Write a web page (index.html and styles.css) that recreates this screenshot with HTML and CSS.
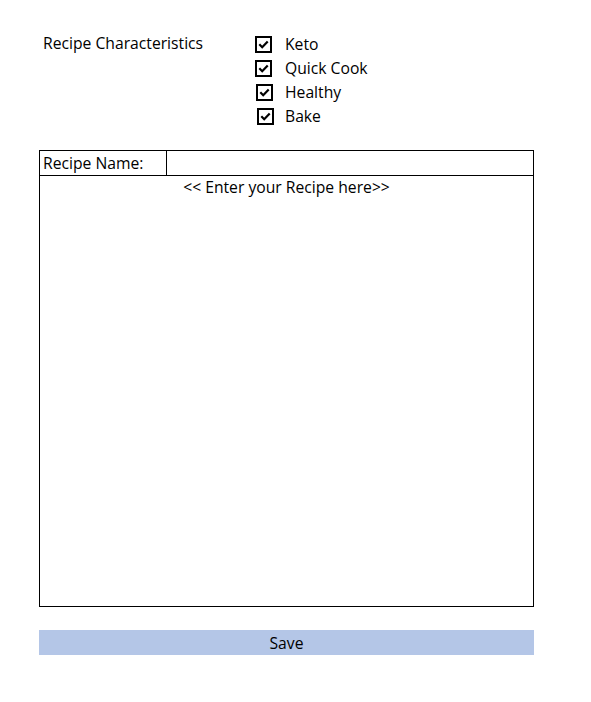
FILE: index.html
```html
<!DOCTYPE html>
<html>
<head>
<meta charset="utf-8">
<link rel="stylesheet" href="styles.css">
</head>
<body>
<div class="page">
  <div class="top">
    <div class="chars-label">Recipe Characteristics</div>
    <ul class="checks">
      <li class="check c1"><span class="box"><svg viewBox="0 0 13 13" width="13" height="13"><path d="M2.3 6.3 L5.2 9.2 L10.7 3.4" fill="none" stroke="#000" stroke-width="2.2"/></svg></span><span class="ctext">Keto</span></li>
      <li class="check c2"><span class="box"><svg viewBox="0 0 13 13" width="13" height="13"><path d="M2.3 6.3 L5.2 9.2 L10.7 3.4" fill="none" stroke="#000" stroke-width="2.2"/></svg></span><span class="ctext">Quick Cook</span></li>
      <li class="check c3"><span class="box"><svg viewBox="0 0 13 13" width="13" height="13"><path d="M2.3 6.3 L5.2 9.2 L10.7 3.4" fill="none" stroke="#000" stroke-width="2.2"/></svg></span><span class="ctext">Healthy</span></li>
      <li class="check c4"><span class="box"><svg viewBox="0 0 13 13" width="13" height="13"><path d="M2.3 6.3 L5.2 9.2 L10.7 3.4" fill="none" stroke="#000" stroke-width="2.2"/></svg></span><span class="ctext">Bake</span></li>
    </ul>
  </div>
  <div class="recipe">
    <div class="name-row">
      <div class="name-label">Recipe Name:</div>
      <div class="name-value"></div>
    </div>
    <div class="body-cell">&lt;&lt; Enter your Recipe here&gt;&gt;</div>
  </div>
  <div class="save">Save</div>
</div>
</body>
</html>
```
FILE: styles.css
```css
html, body {
  margin: 0;
  padding: 0;
  background: #fff;
}
body {
  font-family: "Open Sans", "Noto Sans", sans-serif;
  font-size: 15.7px;
  color: #000;
}
.page {
  width: 591px;
  height: 702px;
  padding: 33px 0 0 39px;
  box-sizing: border-box;
}
.top {
  display: flex;
  height: 117px;
}
.chars-label {
  width: 212px;
  padding-left: 4px;
  line-height: 20px;
}
.checks {
  list-style: none;
  margin: 0;
  padding: 0;
  display: flex;
  flex-direction: column;
}
.check {
  display: flex;
  align-items: center;
  height: 24px;
  padding-left: 0;
}
.check.c3 { padding-left: 1px; }
.check.c4 { padding-left: 2px; }
.box {
  width: 13px;
  height: 13px;
  border: 2px solid #000;
  display: flex;
  align-items: center;
  justify-content: center;
  margin-right: 13px;
  position: relative;
  top: -1px;
}
.check.c3 .box { margin-right: 12px; }
.check.c4 .box { margin-right: 11px; }
.box svg { display: block; }
.ctext {
  line-height: 20px;
  position: relative;
  top: -1px;
}
.recipe {
  width: 495px;
  height: 457px;
  border: 1px solid #000;
  box-sizing: border-box;
  display: flex;
  flex-direction: column;
}
.name-row {
  display: flex;
  height: 24px;
  border-bottom: 1px solid #000;
  flex: none;
}
.name-label {
  width: 123px;
  border-right: 1px solid #000;
  padding-left: 3px;
  line-height: 24px;
  box-sizing: content-box;
}
.name-value { flex: 1; }
.body-cell {
  text-align: center;
  line-height: 24px;
  margin-top: -1px;
}
.save {
  margin-top: 23px;
  width: 495px;
  height: 25px;
  background: #b4c6e7;
  text-align: center;
  line-height: 26px;
}
```
